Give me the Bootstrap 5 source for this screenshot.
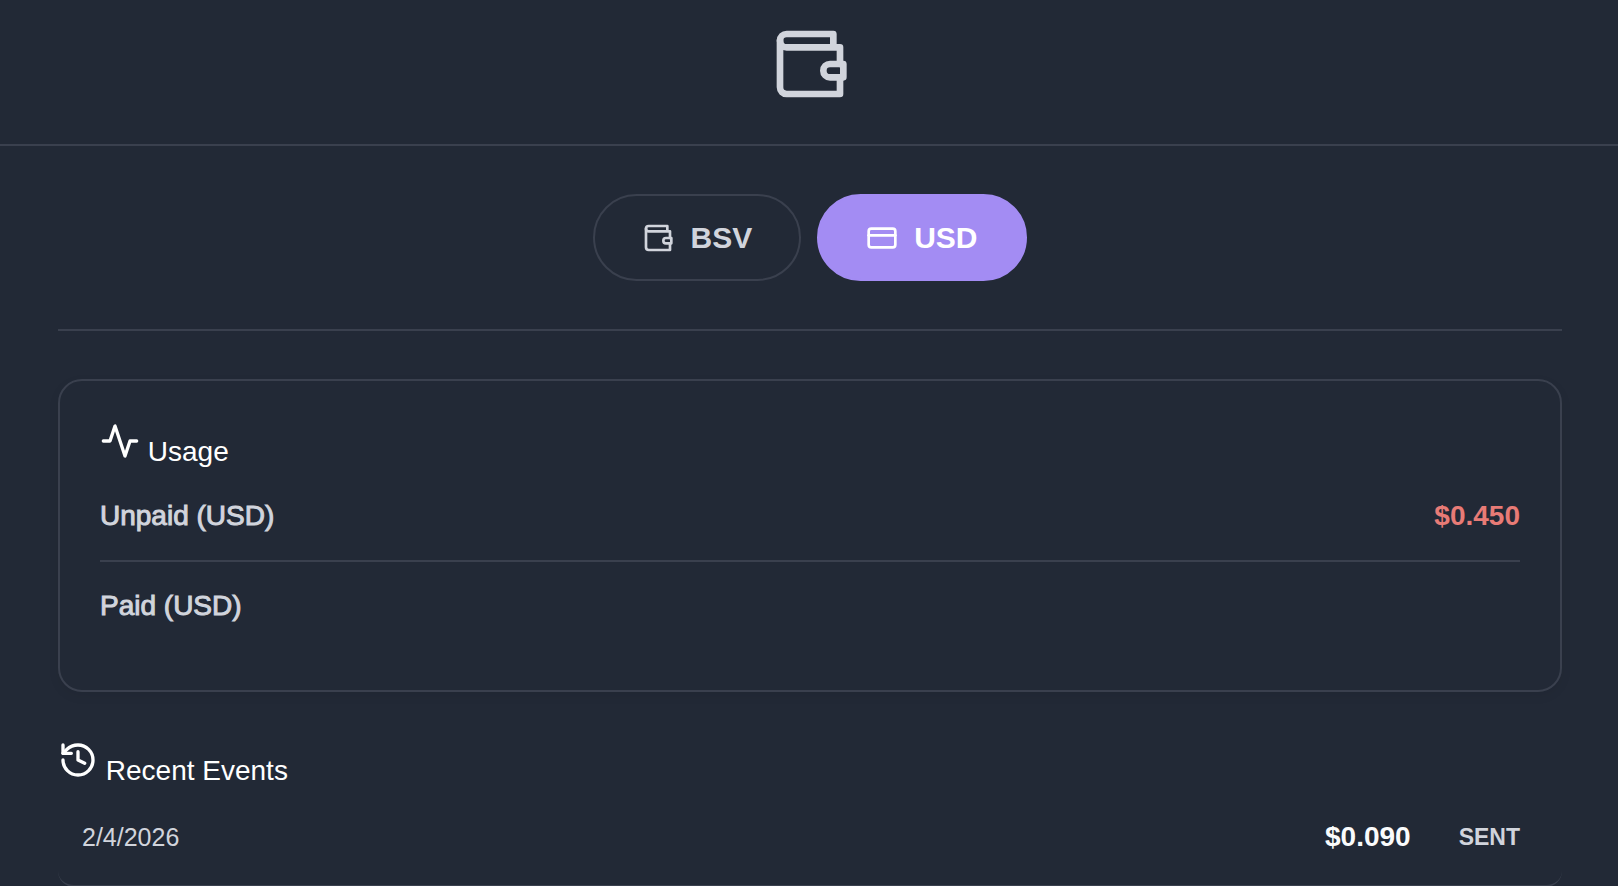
<!DOCTYPE html>
<html lang="en" data-bs-theme="dark">
<head>
<meta charset="utf-8">
<meta name="viewport" content="width=device-width, initial-scale=1">
<title>Wallet</title>
<link href="https://cdn.jsdelivr.net/npm/bootstrap@5.3.0/dist/css/bootstrap.min.css" rel="stylesheet">
<style>
  :root { --line: #3a404e; --soft: #d1d4dc; --ink: #fafbfc; }
  body {
    background: #222936;
    color: var(--ink);
    font-family: "Liberation Sans", Arial, sans-serif;
    font-size: 28px;
    line-height: 40px;
    padding-left: 2px;
  }
  svg { fill: none; stroke: currentColor; stroke-width: 2; stroke-linecap: round; stroke-linejoin: round; }
  .soft { color: var(--soft); }
  .top-bar { height: 146px; padding-top: 24px; margin-left: -2px; padding-left: 2px; border-bottom: 2px solid var(--line); }
  .page { padding: 0 56px; }
  .switcher { padding: 48px 0; border-bottom: 2px solid var(--line); margin-bottom: 48px; }
  .pill {
    --bs-btn-color: var(--soft);
    --bs-btn-border-color: var(--line);
    --bs-btn-border-width: 2px;
    --bs-btn-padding-x: 47px;
    --bs-btn-padding-y: 22px;
    --bs-btn-font-size: 30px;
    --bs-btn-font-weight: 700;
    --bs-btn-line-height: 39px;
    line-height: 39px;
  }
  .pill svg { stroke-width: 2; }
  .pill.active { --bs-btn-active-bg: #a38cf3; --bs-btn-active-border-color: #a38cf3; --bs-btn-active-color: #fff; }
  .panel { border: 2px solid var(--line); border-radius: 24px; padding: 40px; margin-bottom: 48px; box-shadow: 0 4px 12px rgba(0, 0, 0, .06); }
  .title { font-size: 28px; font-weight: 400; line-height: 28px; margin-bottom: 6px; }
  .usage-row { padding: 24px 0; }
  .usage-row + .usage-row { border-top: 2px solid var(--line); }
  .medium { -webkit-text-stroke: 1px currentColor; }
  .due { color: #e87b76; }
  .event { padding: 26px 42px 28px 24px; border-bottom: 2px solid var(--line); border-radius: 16px; }
  .date { font-size: 25px; }
  .status { font-size: 23px; margin-left: 48px; }
</style>
</head>
<body>
<header class="top-bar d-flex justify-content-center soft">
  <svg width="80" height="80" viewBox="0 0 24 24" aria-hidden="true"><path d="M21 12V7H5a2 2 0 0 1 0-4h14v4"/><path d="M3 5v14a2 2 0 0 0 2 2h16v-5"/><path d="M18 12a2 2 0 0 0 0 4h4v-4Z"/></svg>
</header>

<main class="page">
  <div class="switcher d-flex justify-content-center gap-3">
    <button type="button" class="btn pill rounded-pill d-flex align-items-center gap-3">
      <svg width="32" height="32" viewBox="0 0 24 24" aria-hidden="true"><path d="M21 12V7H5a2 2 0 0 1 0-4h14v4"/><path d="M3 5v14a2 2 0 0 0 2 2h16v-5"/><path d="M18 12a2 2 0 0 0 0 4h4v-4Z"/></svg>
      <span>BSV</span>
    </button>
    <button type="button" class="btn pill active rounded-pill d-flex align-items-center gap-3" aria-pressed="true">
      <svg width="32" height="32" viewBox="0 0 24 24" aria-hidden="true"><rect x="2" y="5" width="20" height="14" rx="2"/><path d="M2 10h20"/></svg>
      <span>USD</span>
    </button>
  </div>

  <section class="panel">
    <h2 class="title">
      <svg width="40" height="40" viewBox="0 0 24 24" class="align-baseline" aria-hidden="true"><path d="M22 12h-4l-3 9L9 3l-3 9H2"/></svg>
      <span>Usage</span>
    </h2>
    <div class="usage-row d-flex justify-content-between">
      <span class="soft medium">Unpaid (USD)</span>
      <span class="due fw-bold">$0.450</span>
    </div>
    <div class="usage-row d-flex justify-content-between">
      <span class="soft medium">Paid (USD)</span>
    </div>
  </section>

  <section>
    <h2 class="title">
      <svg width="40" height="40" viewBox="0 0 24 24" class="align-baseline" aria-hidden="true"><path d="M3 12a9 9 0 1 0 9-9 9.75 9.75 0 0 0-6.74 2.74L3 8"/><path d="M3 3v5h5"/><path d="M12 7v5l4 2"/></svg>
      <span>Recent Events</span>
    </h2>
    <div class="event d-flex align-items-center">
      <span class="date soft me-auto">2/4/2026</span>
      <span class="fw-bold">$0.090</span>
      <span class="status soft fw-bold">SENT</span>
    </div>
  </section>
</main>
<script src="https://cdn.jsdelivr.net/npm/bootstrap@5.3.0/dist/js/bootstrap.bundle.min.js"></script>
</body>
</html>
